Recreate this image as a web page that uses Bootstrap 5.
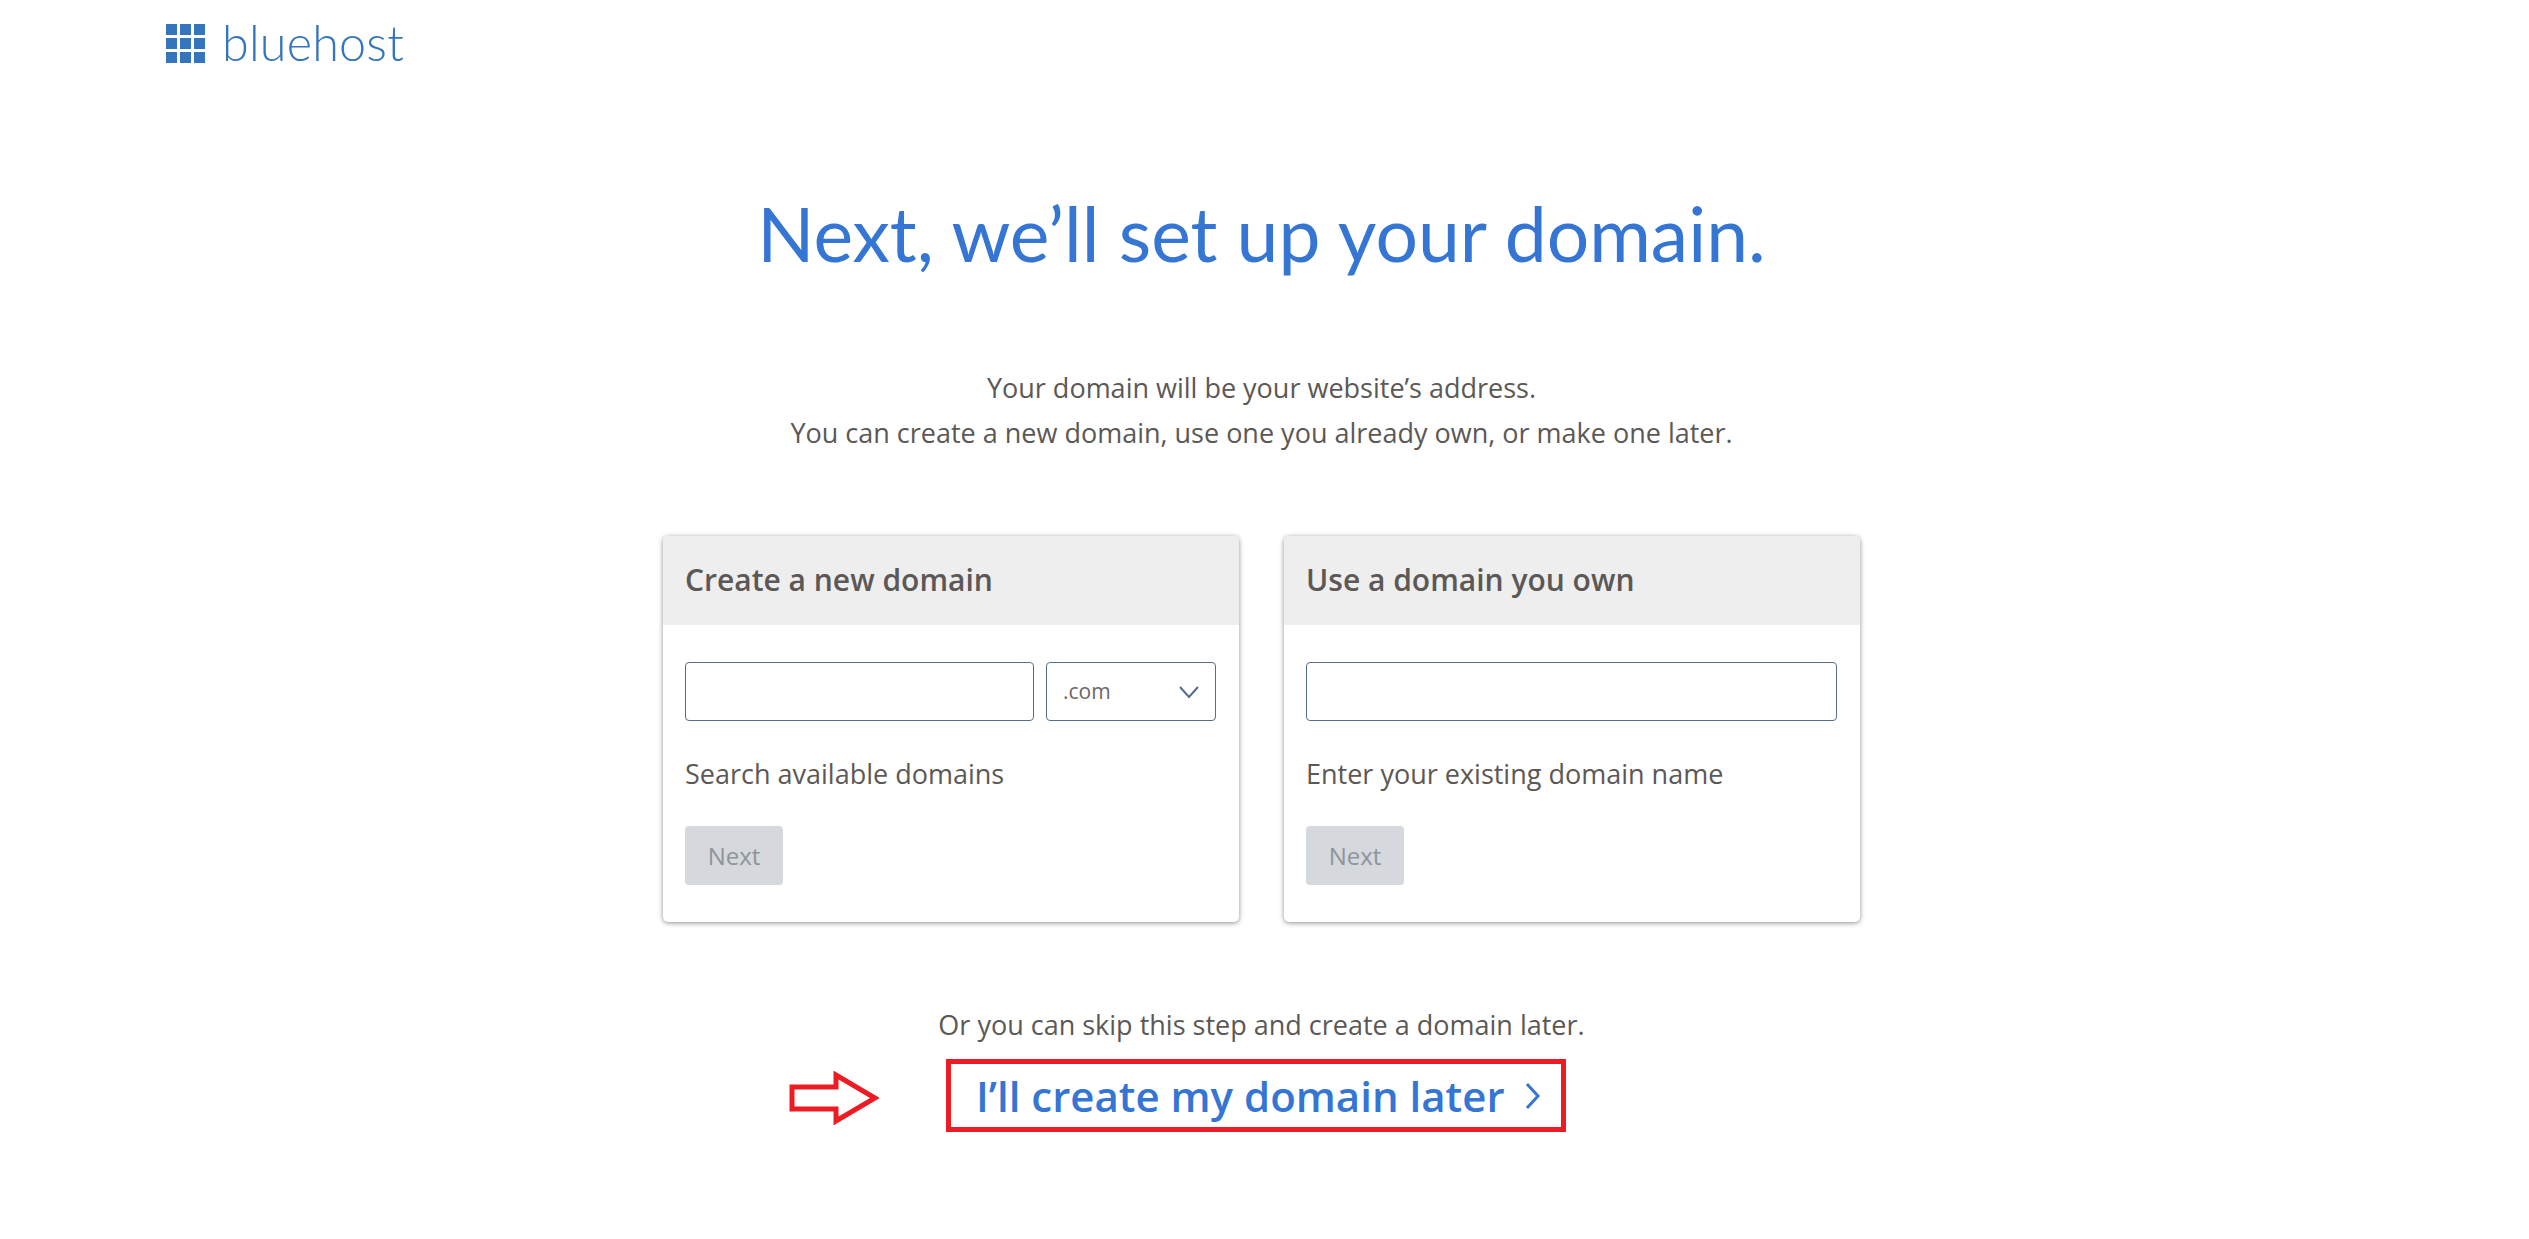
<!DOCTYPE html>
<html lang="en"><head><meta charset="utf-8"><title>bluehost</title>
<link href="https://cdn.jsdelivr.net/npm/bootstrap@5.3.0/dist/css/bootstrap.min.css" rel="stylesheet">
<style>
body{font-family:"Open Sans",sans-serif;color:#5b5855;background:#fff;padding-right:6px;}
.bh-top{padding:24px 0 0 166px;height:91px;gap:17px;color:#3575bc;}
.bh-grid{display:grid;grid-template-columns:repeat(3,11px);grid-auto-rows:11px;gap:3px;width:39px;height:39px;}
.bh-grid span{background:#3575bc;}
.bh-word{font-family:Lato,sans-serif;font-weight:300;font-size:48.5px;line-height:37px;letter-spacing:.2px;}
.bh-title{font-family:Lato,sans-serif;font-weight:400;font-size:75px;line-height:90px;color:#3575d3;margin:97px 0 0;}
.bh-intro{font-size:27px;line-height:45px;margin:87px 0 0;}
.bh-cards{margin-top:81px;gap:45px;}
.bh-card{width:576px;height:386px;border:0;border-radius:5px;box-shadow:0 1px 5px rgba(0,0,0,.45);}
.bh-head{height:89px;padding:0 22px 3px;background:#eee;font-size:30px;font-weight:600;border:0;}
.bh-body{padding:37px 23px 0 22px;}
.bh-field{height:59px;border:1px solid #566c8c;border-radius:4px;}
.bh-select{height:59px;width:170px;flex:none;border:1px solid #566c8c;border-radius:4px;padding:0 16px;font-size:21px;color:#6b6865;background-position:right 14px center;background-size:24px 14px;background-image:url("data:image/svg+xml,%3csvg xmlns='http://www.w3.org/2000/svg' viewBox='0 0 24 14'%3e%3cpath fill='none' stroke='%23566c8c' stroke-width='2' d='M3 2l9 10 9-10'/%3e%3c/svg%3e");}
.bh-pair{gap:12px;}
.bh-help{font-size:27px;line-height:36px;margin:35px 0 0;}
.btn.bh-next:disabled{width:98px;height:59px;margin-top:34px;background:#d5d8dd;border:0;border-radius:4px;color:#8f949b;font-size:24px;padding:0;opacity:1;}
.bh-skip{font-size:27px;line-height:36px;margin:85px 0 0;}
.bh-linkwrap{margin-top:16px;padding-right:11px;}
.bh-link{height:73px;width:620px;border:5px solid #ed1c24;padding-left:25px;gap:20px;color:#3575d3;font-size:42px;font-weight:600;text-decoration:none;}
.bh-arrow{position:absolute;right:calc(100% + 72px);top:7px;}
</style></head><body>
<header class="d-flex align-items-start bh-top">
  <div class="bh-grid"><span></span><span></span><span></span><span></span><span></span><span></span><span></span><span></span><span></span></div>
  <div class="bh-word">bluehost</div>
</header>
<main class="text-center">
  <h1 class="bh-title">Next, we’ll set up your domain.</h1>
  <p class="bh-intro">Your domain will be your website’s address.<br>You can create a new domain, use one you already own, or make one later.</p>
  <div class="d-flex justify-content-center text-start bh-cards">
    <div class="card bh-card">
      <div class="card-header d-flex align-items-center bh-head">Create a new domain</div>
      <div class="card-body bh-body">
        <div class="d-flex bh-pair"><input type="text" class="form-control bh-field" aria-label="Domain">
        <select class="form-select bh-select" aria-label="Extension"><option>.com</option></select></div>
        <p class="bh-help">Search available domains</p>
        <button class="btn bh-next" disabled>Next</button>
      </div>
    </div>
    <div class="card bh-card">
      <div class="card-header d-flex align-items-center bh-head">Use a domain you own</div>
      <div class="card-body bh-body">
        <input type="text" class="form-control bh-field" aria-label="Existing domain">
        <p class="bh-help">Enter your existing domain name</p>
        <button class="btn bh-next" disabled>Next</button>
      </div>
    </div>
  </div>
  <p class="bh-skip">Or you can skip this step and create a domain later.</p>
  <div class="d-flex justify-content-center bh-linkwrap">
    <a href="#" class="d-flex align-items-center position-relative bh-link">I’ll create my domain later
      <svg width="16" height="28" viewBox="0 0 16 28" fill="none" stroke="#3575d3" stroke-width="3"><path d="M2 2l11 12L2 26"/></svg>
      <svg class="bh-arrow" width="90" height="54" viewBox="0 0 90 54" fill="#fff" stroke="#ed1c24" stroke-width="5"><path d="M3 16H47V4L86 27 47 50V38H3Z"/></svg>
    </a>
  </div>
</main>
</body></html>
